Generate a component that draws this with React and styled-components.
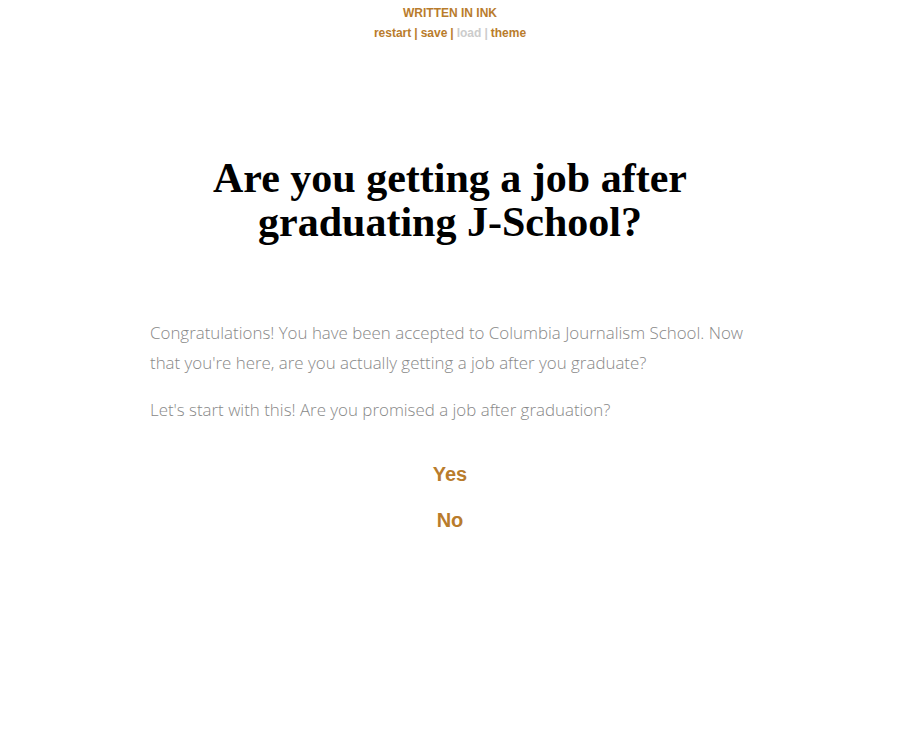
import React from 'react'
import styled, { createGlobalStyle } from 'styled-components'

const GlobalStyle = createGlobalStyle`
  html, body {
    margin: 0;
    padding: 0;
    background: #fff;
  }
  body {
    font-family: 'Open Sans', sans-serif;
    font-weight: 300;
  }
`

const Header = styled.header`
  display: flex;
  flex-direction: column;
  align-items: center;
  gap: 4px;
  padding-top: 5px;
  font-family: 'Liberation Sans', Arial, sans-serif;
  font-size: 12px;
  font-weight: 700;
  line-height: 16px;
  color: #b97c2c;
`

const Brand = styled.div`
  text-transform: uppercase;
`

const Controls = styled.nav`
  display: flex;
  gap: 3px;
`

const ControlLink = styled.a`
  color: ${p => (p.disabled ? '#ccc' : '#b97c2c')};
  text-decoration: none;
  cursor: ${p => (p.disabled ? 'default' : 'pointer')};
`

const Sep = styled.span`
  color: ${p => (p.light ? '#ccc' : '#b97c2c')};
`

const Container = styled.main`
  max-width: 600px;
  margin: 0 auto;
  padding: 0 20px;
`

const Title = styled.h1`
  margin: 115px 0 0;
  font-family: 'Liberation Serif', Georgia, serif;
  font-size: 42px;
  line-height: 44px;
  font-weight: 700;
  text-align: center;
  color: #000;
`

const Story = styled.div`
  margin-top: 74px;
`

const Para = styled.p`
  margin: 0 0 17px;
  font-size: 16.9px;
  line-height: 30px;
  color: #888;
  font-weight: 300;
`

const Choices = styled.div`
  display: flex;
  flex-direction: column;
  align-items: center;
  gap: 12px;
  margin-top: 32px;
`

const Choice = styled.a`
  font-family: 'Liberation Sans', Arial, sans-serif;
  font-size: 20px;
  line-height: 34px;
  font-weight: 700;
  color: #b97c2c;
  text-decoration: none;
  cursor: pointer;
`

export default function App() {
  return (
    <>
      <GlobalStyle />
      <Header>
        <Brand>Written in Ink</Brand>
        <Controls>
          <ControlLink>restart</ControlLink>
          <Sep>|</Sep>
          <ControlLink>save</ControlLink>
          <Sep>|</Sep>
          <ControlLink disabled>load</ControlLink>
          <Sep light>|</Sep>
          <ControlLink>theme</ControlLink>
        </Controls>
      </Header>
      <Container>
        <Title>Are you getting a job after graduating J-School?</Title>
        <Story>
          <Para>
            Congratulations! You have been accepted to Columbia Journalism School. Now
            that you're here, are you actually getting a job after you graduate?
          </Para>
          <Para>Let's start with this! Are you promised a job after graduation?</Para>
        </Story>
        <Choices>
          <Choice>Yes</Choice>
          <Choice>No</Choice>
        </Choices>
      </Container>
    </>
  )
}
